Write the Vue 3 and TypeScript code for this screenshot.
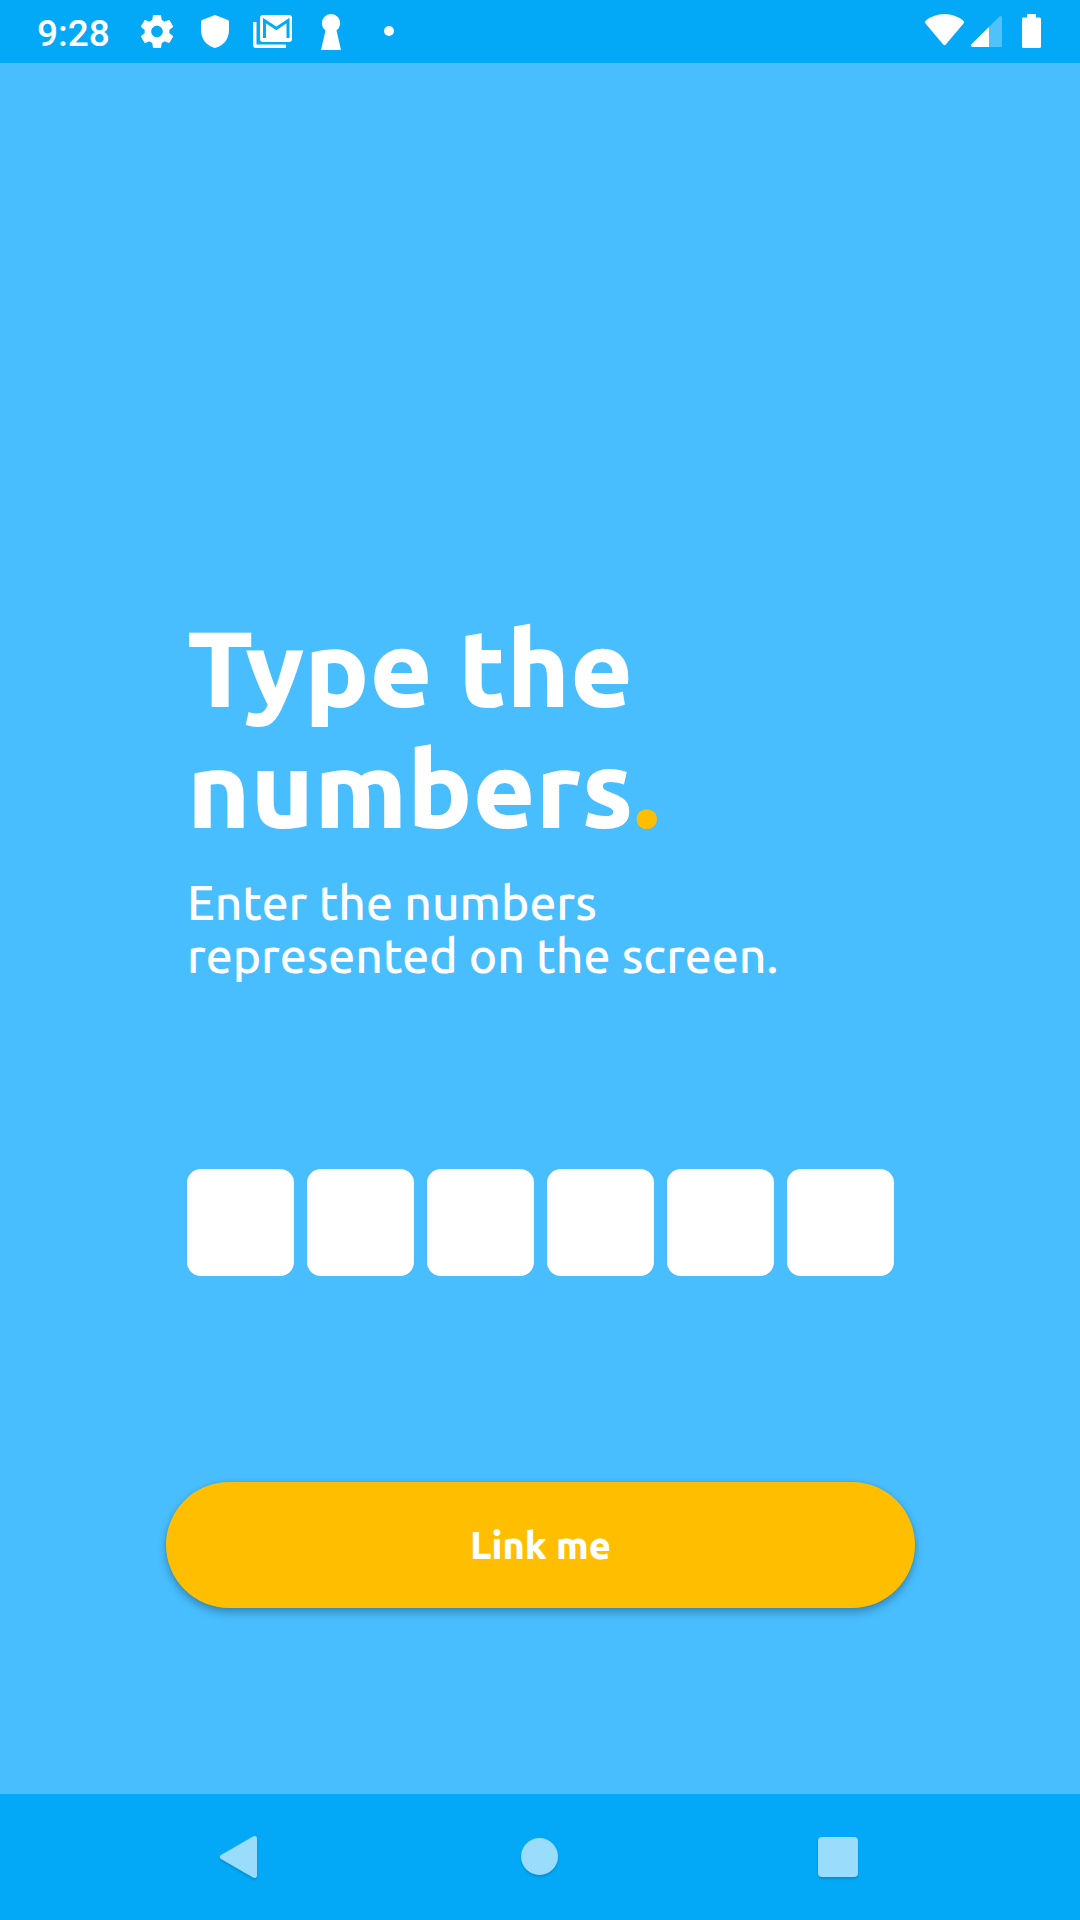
<script setup lang="ts">
import { ref } from 'vue'

const digits = ref<string[]>(['', '', '', '', '', ''])
</script>

<template>
  <div class="screen">
    <header class="status">
      <span class="time">9:28</span>
      <div class="notices">
        <svg class="notice" viewBox="128 0 58 62" aria-hidden="true">
          <path transform="translate(137.2 11.7) scale(1.65)" d="M19.43 12.98c.04-.32.07-.64.07-.98s-.03-.66-.07-.98l2.11-1.65c.19-.15.24-.42.12-.64l-2-3.46c-.12-.22-.39-.3-.61-.22l-2.49 1c-.52-.4-1.08-.73-1.69-.98l-.38-2.65C14.46 2.18 14.25 2 14 2h-4c-.25 0-.46.18-.49.42l-.38 2.65c-.61.25-1.17.59-1.69.98l-2.49-1c-.23-.09-.49 0-.61.22l-2 3.46c-.13.22-.07.49.12.64l2.11 1.65c-.04.32-.07.65-.07.98s.03.66.07.98l-2.11 1.65c-.19.15-.24.42-.12.64l2 3.46c.12.22.39.3.61.22l2.49-1c.52.4 1.08.73 1.69.98l.38 2.65c.03.24.24.42.49.42h4c.25 0 .46-.18.49-.42l.38-2.65c.61-.25 1.17-.59 1.69-.98l2.49 1c.23.09.49 0 .61-.22l2-3.46c.12-.22.07-.49-.12-.64l-2.11-1.65zM12 15.5c-1.93 0-3.5-1.57-3.5-3.5s1.57-3.5 3.5-3.5 3.5 1.57 3.5 3.5-1.57 3.5-3.5 3.5z" />
        </svg>
        <svg class="notice" viewBox="186 0 58 62" aria-hidden="true">
          <path d="M215 15L228 20Q229 20.500 229 21.500V30C229 39 223.500 46 215 48C206.500 46 201 39 201 30V21.500Q201 20.500 202 20Z" />
        </svg>
        <svg class="notice" viewBox="244 0 58 62" aria-hidden="true">
          <path d="M253 22H256.500V44.500H286V48H256Q253 48 253 45Z" />
          <rect x="260" y="15" width="32" height="27" rx="3" />
          <path class="mail" d="M264.500 38V20.500L276.300 28.500L288 20.500V38" />
        </svg>
        <svg class="notice" viewBox="302 0 58 62" aria-hidden="true">
          <path d="M325.500 30.500A9.200 9.200 0 1 1 336.500 30.500L341 50H321Z" />
        </svg>
        <svg class="notice" viewBox="360 0 58 62" aria-hidden="true">
          <circle cx="389" cy="31" r="5" />
        </svg>
      </div>
      <div class="signals">
        <svg width="48" height="62" viewBox="920 0 48 62" aria-hidden="true">
          <path d="M925.500 23.500Q924 21.800 925.800 20.500Q934 14 944.500 14Q955 14 963.200 20.500Q965 21.800 963.500 23.500L945.800 44.500Q944.500 46 943.200 44.500Z" />
        </svg>
        <svg width="40" height="62" viewBox="968 0 40 62" aria-hidden="true">
          <path opacity=".3" d="M972 47Q970 46 971.500 44.200L999.500 16.500Q1002 15 1002 18V45.500Q1002 47 1000.500 47Z" />
          <path d="M972.500 47Q970 46 971.500 44.200L989 27V47Z" />
        </svg>
        <svg width="40" height="62" viewBox="1008 0 40 62" aria-hidden="true">
          <path d="M1027 17.500V14H1036V17.500H1039.500Q1041 17.500 1041 19V46.500Q1041 48 1039.500 48H1023.500Q1022 48 1022 46.500V19Q1022 17.500 1023.500 17.500Z" />
        </svg>
      </div>
    </header>

    <main class="content">
      <div class="inset">
        <h1>Type the<br />numbers<span class="dot">.</span></h1>
        <p>Enter the numbers<br />represented on the screen.</p>
      </div>
      <form class="form" @submit.prevent>
        <div class="inset code">
          <input
            v-for="(_, i) in digits"
            :key="i"
            v-model="digits[i]"
            type="text"
            inputmode="numeric"
            maxlength="1"
            :aria-label="`Digit ${i + 1}`"
          />
        </div>
        <button class="submit" type="submit">Link me</button>
      </form>
    </main>

    <nav class="nav">
      <button type="button" aria-label="Back">
        <svg width="60" height="60" viewBox="210 1827 60 60">
          <path d="M221 1855L253 1836.500Q257 1835 257 1839V1875Q257 1879 253 1877.500L221 1859Q218.500 1857 221 1855Z" />
        </svg>
      </button>
      <button type="button" aria-label="Home">
        <svg width="60" height="60" viewBox="510 1827 60 60"><circle cx="539.500" cy="1856.500" r="18.500" /></svg>
      </button>
      <button type="button" aria-label="Recent apps">
        <svg width="60" height="60" viewBox="810 1827 60 60"><rect x="818" y="1837" width="40" height="40" rx="4" /></svg>
      </button>
    </nav>
  </div>
</template>

<style>
body {
  margin: 0;
}
</style>

<style scoped>
.screen {
  min-height: 100vh;
  display: flex;
  flex-direction: column;
  background: #48beff;
  color: #fff;
  font-family: Ubuntu, "Noto Sans", sans-serif;
}
.status {
  height: 63px;
  display: flex;
  background: #03a9f7;
  padding: 0 32px 0 37px;
}
.time {
  width: 91px;
  font: 500 37px/67px Roboto, sans-serif;
}
.status svg {
  fill: #fff;
  display: block;
}
.notices,
.signals {
  display: flex;
}
.notice {
  width: 58px;
  height: 62px;
}
.status .mail {
  fill: none;
  stroke: #03a9f7;
  stroke-width: 3;
}
.signals {
  margin-left: auto;
}
.content {
  flex: 1;
  display: flex;
  flex-direction: column;
  justify-content: flex-end;
  padding: 0 165px 186px 166px;
}
.inset {
  padding: 0 21px;
}
h1 {
  margin: 0;
  font-size: 108px;
  line-height: 121px;
  font-weight: 800;
}
.dot {
  color: #ffbf00;
}
p {
  margin: 28px 0 0;
  font-size: 48px;
  line-height: 53px;
  font-weight: 500;
  white-space: nowrap;
}
.form {
  display: flex;
  flex-direction: column;
  gap: 206px;
  margin-top: 187px;
}
.code {
  display: flex;
  gap: 13px;
}
.code input {
  flex: 1;
  min-width: 0;
  aspect-ratio: 1;
  box-sizing: border-box;
  border: 0;
  border-radius: 14px;
  padding: 0;
  background: #fff;
  color: #48beff;
  font: 700 48px Ubuntu, "Noto Sans", sans-serif;
  text-align: center;
}
.submit {
  height: 126px;
  border: 0;
  border-radius: 63px;
  padding: 0;
  background: #ffbf00;
  color: #fff;
  font: 800 38px/40px Ubuntu, "Noto Sans", sans-serif;
  box-shadow: 0 5px 8px rgba(0, 0, 0, 0.25), 0 0 4px rgba(0, 0, 0, 0.1);
}
.nav {
  height: 126px;
  display: flex;
  padding: 0 90px;
  background: #03a9f7;
}
.nav button {
  flex: 1;
  display: flex;
  align-items: center;
  justify-content: center;
  border: 0;
  padding: 0;
  background: none;
}
.nav svg {
  fill: #9adcfb;
  filter: drop-shadow(0 2px 1px rgba(0, 0, 0, 0.15));
}
</style>
